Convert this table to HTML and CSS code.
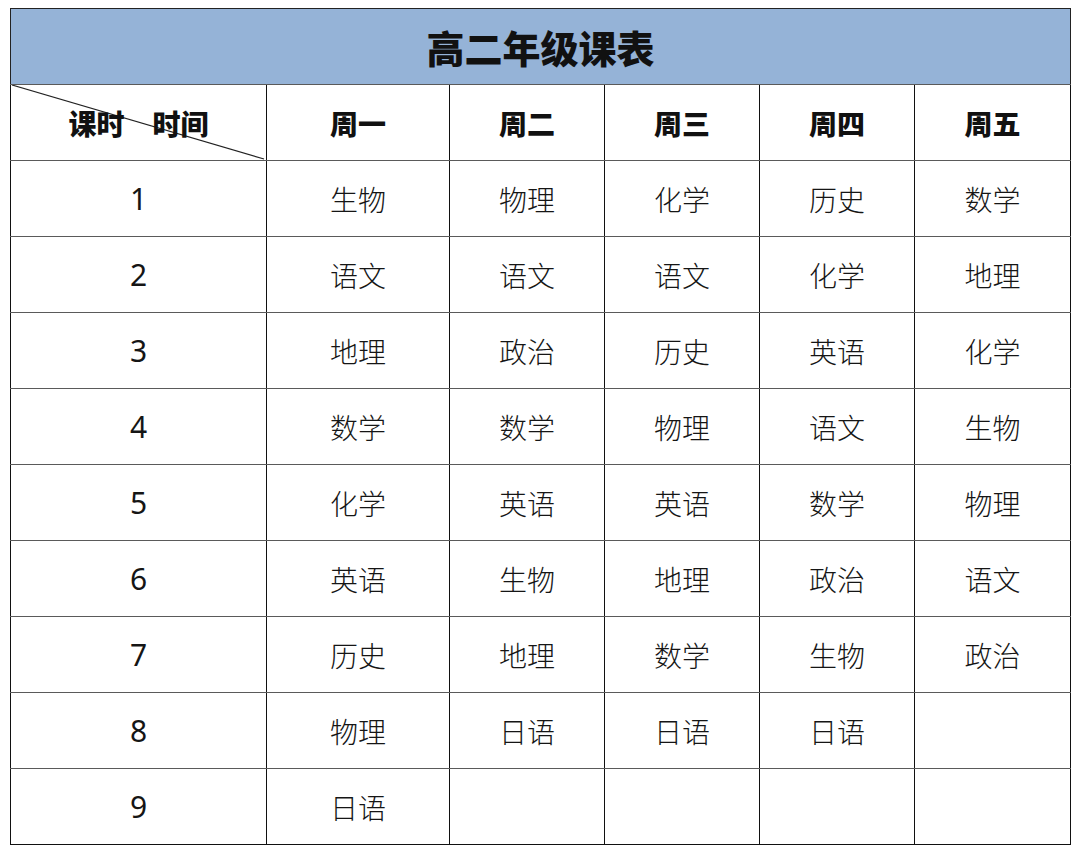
FILE: index.html
```html
<!DOCTYPE html>
<html lang="zh-CN">
<head>
<meta charset="utf-8">
<title>高二年级课表</title>
<link rel="stylesheet" href="styles.css">
</head>
<body>
<table class="schedule">
  <colgroup>
    <col class="c0"><col class="c1"><col class="c2"><col class="c3"><col class="c4"><col class="c5">
  </colgroup>
  <thead>
    <tr><th class="title" colspan="6">高二年级课表</th></tr>
    <tr class="head">
      <th class="corner">
        <svg class="diag" viewBox="0 0 256 76" preserveAspectRatio="none" aria-hidden="true">
          <line x1="1" y1="0" x2="254" y2="75" stroke="#222222" stroke-width="1.2"/>
        </svg>
        <span class="corner-text">课时　时间</span>
      </th>
      <th>周一</th><th>周二</th><th>周三</th><th>周四</th><th>周五</th>
    </tr>
  </thead>
  <tbody>
    <tr><td class="num">1</td><td>生物</td><td>物理</td><td>化学</td><td>历史</td><td>数学</td></tr>
    <tr><td class="num">2</td><td>语文</td><td>语文</td><td>语文</td><td>化学</td><td>地理</td></tr>
    <tr><td class="num">3</td><td>地理</td><td>政治</td><td>历史</td><td>英语</td><td>化学</td></tr>
    <tr><td class="num">4</td><td>数学</td><td>数学</td><td>物理</td><td>语文</td><td>生物</td></tr>
    <tr><td class="num">5</td><td>化学</td><td>英语</td><td>英语</td><td>数学</td><td>物理</td></tr>
    <tr><td class="num">6</td><td>英语</td><td>生物</td><td>地理</td><td>政治</td><td>语文</td></tr>
    <tr><td class="num">7</td><td>历史</td><td>地理</td><td>数学</td><td>生物</td><td>政治</td></tr>
    <tr><td class="num">8</td><td>物理</td><td>日语</td><td>日语</td><td>日语</td><td></td></tr>
    <tr><td class="num">9</td><td>日语</td><td></td><td></td><td></td><td></td></tr>
  </tbody>
</table>
</body>
</html>
```

FILE: styles.css
```css
html, body {
  margin: 0;
  padding: 0;
  background: #ffffff;
}
body {
  padding: 8px 10px;
  font-family: "Noto Sans CJK SC", "Noto Sans", sans-serif;
  color: #151515;
}
.schedule {
  border-collapse: collapse;
  table-layout: fixed;
  width: 1060px;
}
.c0 { width: 256px; }
.c1 { width: 183px; }
.c2 { width: 155px; }
.c3 { width: 155px; }
.c4 { width: 155px; }
.c5 { width: 156px; }
.schedule th,
.schedule td {
  height: 75px;
  padding: 0;
  text-align: center;
  vertical-align: middle;
  border-left: 1px solid #111111;
  border-right: 1px solid #111111;
  border-top: 1px solid #5a5a5a;
  border-bottom: 1px solid #5a5a5a;
  font-size: 28px;
  font-weight: 300;
  line-height: 1;
}
.schedule tr:last-child td {
  border-bottom-color: #111111;
}
.schedule .title {
  background: #95b3d7;
  font-size: 38px;
  font-weight: 900;
  color: #111111;
  border: 1px solid #222222;
  border-bottom-color: #5a5a5a;
}
.schedule .head th {
  font-size: 28px;
  font-weight: 900;
  color: #111111;
}
.schedule .head th.corner {
  position: relative;
}
.diag {
  position: absolute;
  left: 0;
  top: 0;
  width: 100%;
  height: 100%;
  display: block;
}
.corner-text {
  position: relative;
}
.schedule .num {
  font-family: "Noto Sans", "Noto Sans CJK SC", sans-serif;
  font-size: 30px;
  font-weight: 400;
}
```
